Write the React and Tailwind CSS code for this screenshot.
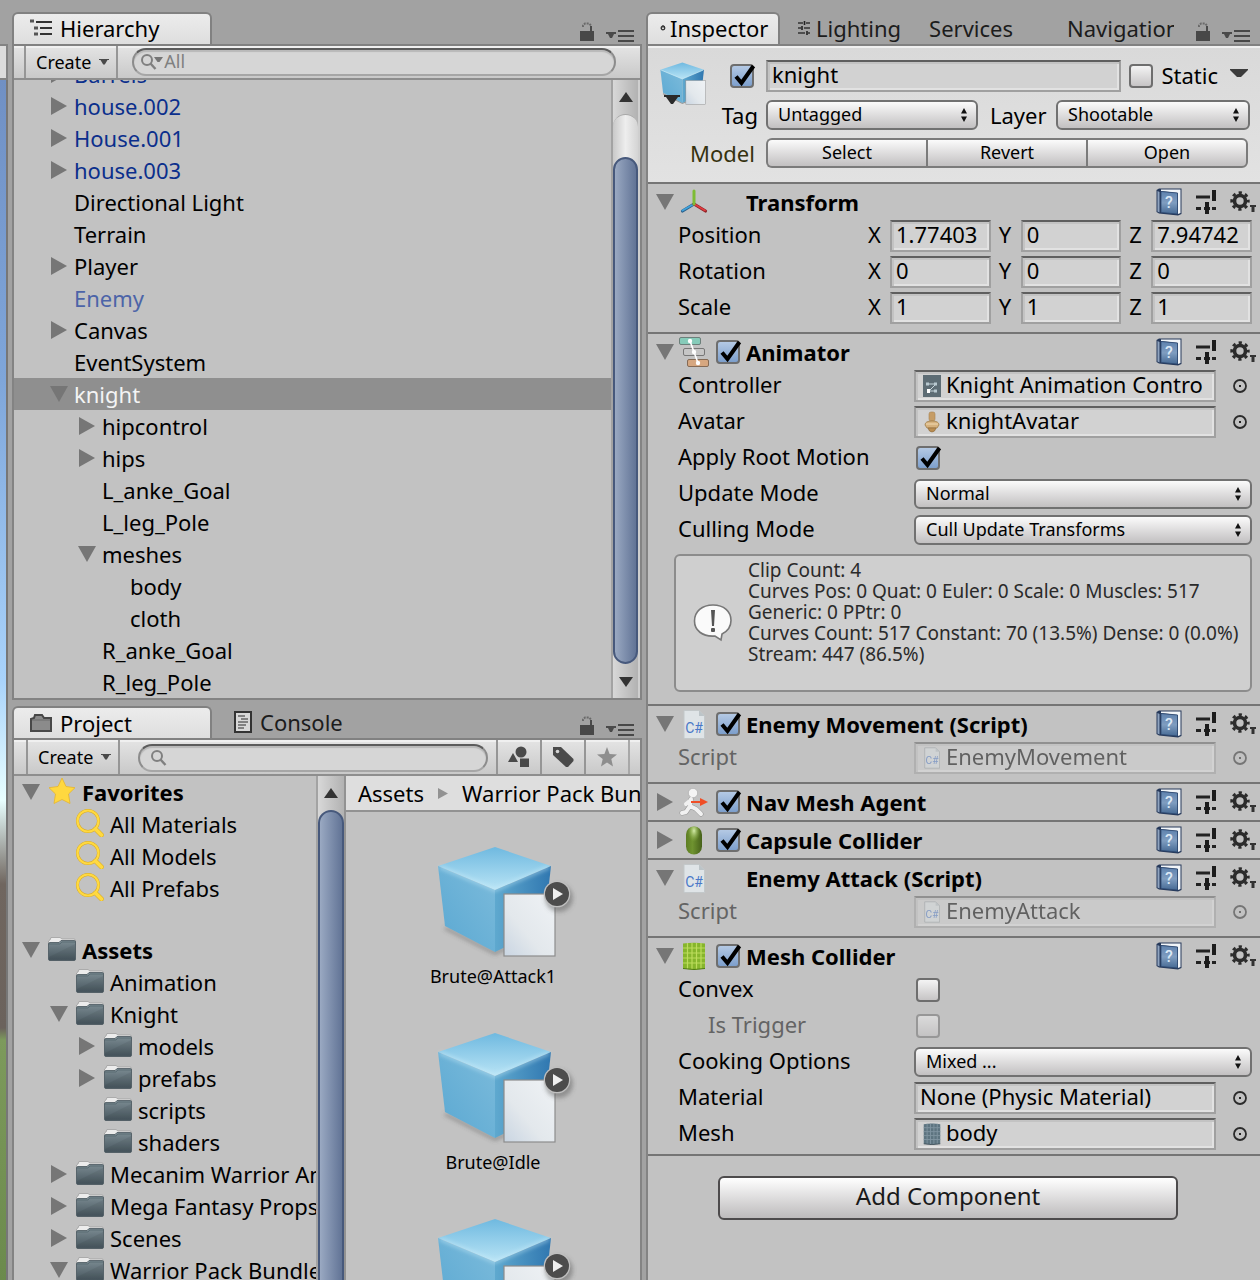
import React from "react";

/* ---------- small glyphs ---------- */

function Foldout({ open }) {
  return (
    <svg width="18" height="18" viewBox="0 0 18 18" className="block shrink-0" aria-hidden="true">
      <path d={open ? "M0 1H18L9 17Z" : "M1 0V18L17 9Z"} fill="#767676" />
    </svg>
  );
}

function Caret() {
  return (
    <svg width="10" height="6" viewBox="0 0 10 6" className="block shrink-0" aria-hidden="true">
      <path d="M0 0H10V1H8.500L5.800 5.500H4.200L1.500 1H0Z" fill="#4a4a4a" />
    </svg>
  );
}

function LockIcon() {
  return (
    <svg width="14" height="20" viewBox="0 0 14 20" className="block" aria-hidden="true">
      <path d="M3 5V3.500L5 1.500H9L11 3.500V9" fill="none" stroke="#6a6a6a" strokeWidth="2" strokeDasharray="2 1" />
      <path d="M11 4V9" stroke="#4a4a4a" strokeWidth="2" />
      <rect x="0" y="9" width="14" height="10" fill="#484848" />
    </svg>
  );
}

function MenuIcon() {
  return (
    <svg width="28" height="12" viewBox="0 0 28 12" className="block" aria-hidden="true">
      <path d="M0 2H10V4H8L6 8H4L2 4H0Z" fill="#4a4a4a" />
      <path d="M12 1H28M12 6H28M12 11H28" stroke="#484848" strokeWidth="2" />
    </svg>
  );
}

function HierarchyIcon() {
  return (
    <svg width="22" height="18" viewBox="0 0 22 18" className="block shrink-0" aria-hidden="true">
      <path d="M6 3H22M10 9H22M10 15H22" stroke="#333" strokeWidth="2" />
      <path d="M0 2H4M4 9H8M4 15H8" stroke="#555" strokeWidth="3" />
    </svg>
  );
}

function ProjectIcon() {
  return (
    <svg width="22" height="18" viewBox="0 0 22 18" className="block shrink-0" aria-hidden="true">
      <path d="M1 17V5L4 4L5 1H12L14 4H21V17Z" fill="#8b8b8b" stroke="#484848" strokeWidth="2" />
      <path d="M2 6H20" stroke="#6d6d6d" strokeWidth="1" />
    </svg>
  );
}

function ConsoleIcon() {
  return (
    <svg width="18" height="22" viewBox="0 0 18 22" className="block shrink-0" aria-hidden="true">
      <rect x="1" y="1" width="16" height="20" fill="#d8d8d8" stroke="#333" strokeWidth="2" />
      <path d="M4 5H11M7 8H14M4 11H14M4 14H12M4 17H10" stroke="#666" strokeWidth="1.300" />
    </svg>
  );
}

function LightingIcon() {
  return (
    <svg width="12" height="14" viewBox="0 0 12 14" className="block shrink-0" aria-hidden="true">
      <path d="M0 2H5M8 2H12M0 7H3M6 7H12M0 12H7M10 12H12" stroke="#333" strokeWidth="1.300" />
      <path d="M6.500 0V4M4 5V9M9 10V14" stroke="#222" strokeWidth="1.600" />
    </svg>
  );
}

function InspectorDot() {
  return (
    <svg width="6" height="6" viewBox="0 0 6 6" className="block shrink-0" aria-hidden="true">
      <circle cx="3" cy="3" r="1.800" fill="none" stroke="#333" strokeWidth="1.300" />
      <path d="M3 0V3" stroke="#333" />
    </svg>
  );
}

function SearchGlyph({ arrow }) {
  return (
    <svg width="24" height="18" viewBox="0 0 24 18" className="block shrink-0" aria-hidden="true">
      <circle cx="7" cy="7" r="5" fill="none" stroke="#808080" strokeWidth="2" />
      <path d="M10.500 10.500L15.500 16" stroke="#808080" strokeWidth="2.400" />
      {arrow && <path d="M14 4H23L19.500 9H17.500Z" fill="#757575" />}
    </svg>
  );
}

function TransformIcon() {
  return (
    <svg width="28" height="26" viewBox="0 0 28 26" className="block" aria-hidden="true">
      <path d="M14 15L2.500 22" stroke="#2c5f8a" strokeWidth="3.200" strokeLinecap="round" />
      <path d="M14 15L2.500 21.500" stroke="#3fa3dc" strokeWidth="1.800" strokeLinecap="round" />
      <path d="M14 15L25.500 22" stroke="#8d2226" strokeWidth="3.200" strokeLinecap="round" />
      <path d="M14 15L25 21.500" stroke="#e23c40" strokeWidth="1.600" strokeLinecap="round" />
      <path d="M14 15V2" stroke="#7ebc34" strokeWidth="3" strokeLinecap="round" />
    </svg>
  );
}

function AnimatorIcon() {
  return (
    <svg width="30" height="30" viewBox="0 0 30 30" className="block" aria-hidden="true">
      <rect x="0.500" y="0.500" width="21" height="7" rx="1.500" fill="#86cbb9" stroke="#6c7f7a" />
      <rect x="4.500" y="11.500" width="21" height="7" rx="1.500" fill="#c6c6c6" stroke="#777" />
      <rect x="8.500" y="22.500" width="21" height="7" rx="1.500" fill="#d6a780" stroke="#846a55" />
      <path d="M11 4L15 15L19 26" fill="none" stroke="#fff" strokeWidth="1.600" />
      <circle cx="11" cy="4" r="2.200" fill="#fff" />
      <circle cx="15" cy="15" r="2.200" fill="#fff" />
      <circle cx="19" cy="26" r="2.200" fill="#fff" />
    </svg>
  );
}

function ScriptIcon({ small }) {
  return (
    <svg width={small ? 16 : 22} height={small ? 22 : 29} viewBox="0 0 22 29" className="block shrink-0" aria-hidden="true">
      <path d="M1 0.500H16L21.500 6V28.500H1Z" fill="#dfe4e7" stroke={small ? "#8f989c" : "#c3c8ca"} />
      <path d="M16 0.500V6H21.500Z" fill="#bcc4c8" />
      <text x="11" y="23" textAnchor="middle" fontSize="14" fontFamily="Roboto, sans-serif" fill="#4a78c8">C#</text>
    </svg>
  );
}

function NavAgentIcon() {
  return (
    <svg width="30" height="29" viewBox="0 0 30 29" className="block" aria-hidden="true">
      <g stroke="#9a9a9a" strokeWidth="5" fill="none" strokeLinecap="round" strokeLinejoin="round">
        <path d="M12 11L11 18L17 21L22 26M11 18L7 24L3 25" />
      </g>
      <circle cx="14" cy="5" r="4.700" fill="#f4f4f4" stroke="#aaa" strokeWidth="0.700" />
      <g stroke="#f1f1f1" strokeWidth="4" fill="none" strokeLinecap="round" strokeLinejoin="round">
        <path d="M12 11L11 18L17 21L22 26M11 18L7 24L3 25M12 12L7 16" />
      </g>
      <path d="M12 14H23" stroke="#f04e26" strokeWidth="2" />
      <path d="M21 10L29 14L21 18Z" fill="#f04e26" />
    </svg>
  );
}

function CapsuleIcon() {
  return (
    <svg width="18" height="29" viewBox="0 0 18 29" className="block" aria-hidden="true">
      <defs>
        <linearGradient id="capBody" x1="0" x2="1">
          <stop offset="0" stopColor="#5d7d22" />
          <stop offset="0.400" stopColor="#6f9330" />
          <stop offset="1" stopColor="#46611a" />
        </linearGradient>
        <radialGradient id="capTop" cx="0.500" cy="0.150" r="0.400">
          <stop offset="0" stopColor="#d5ecab" />
          <stop offset="1" stopColor="#8db347" stopOpacity="0" />
        </radialGradient>
      </defs>
      <rect x="1" y="0.500" width="16" height="28" rx="8" fill="url(#capBody)" />
      <rect x="1" y="0.500" width="16" height="28" rx="8" fill="url(#capTop)" />
    </svg>
  );
}

function MeshIcon({ small }) {
  const base = small ? "#5d7480" : "#86b52c";
  const line = small ? "#8094a0" : "#bcdc5c";
  const w = small ? 18 : 24;
  const h = small ? 22 : 28;
  return (
    <svg width={w} height={h} viewBox="0 0 24 28" preserveAspectRatio="none" className="block shrink-0" aria-hidden="true">
      <path d="M1 1.500Q12 0 23 1.500V26.500Q12 28.500 1 26.500Z" fill={base} />
      <path d="M5.500 1V27M10 1V28M14.500 1V28M19 1V27M1 6H23M1 11H23M1 16H23M1 21H23" stroke={line} strokeWidth="1.200" />
      <path d="M1 26.500Q12 28.500 23 26.500" fill="none" stroke={small ? "#33444d" : "#4f7a12"} />
    </svg>
  );
}

function ControllerIcon() {
  return (
    <svg width="18" height="22" viewBox="0 0 18 22" className="block shrink-0" aria-hidden="true">
      <rect width="18" height="22" fill="#5d6c74" />
      <path d="M5 9L13 9L6 16L13 16" fill="none" stroke="#c9d6dc" strokeWidth="1" />
      <path d="M3 7.500H6V10.500H3ZM11 7.500H14V10.500H11ZM11 14.500H14V17.500H11Z" fill="#b8c8cf" />
      <rect x="4" y="14" width="3" height="4" fill="#fff" />
    </svg>
  );
}

function AvatarIcon() {
  return (
    <svg width="18" height="22" viewBox="0 0 18 22" className="block shrink-0" aria-hidden="true">
      <rect x="6" y="1" width="6" height="9" rx="2" fill="#c69d66" stroke="#a88452" strokeWidth="0.600" />
      <path d="M2 14Q2 10 9 10Q16 10 16 14L14 17H4Z" fill="#d6b27e" stroke="#a07c48" strokeWidth="0.800" />
      <path d="M5 17H13Q12 21 9 21Q6 21 5 17Z" fill="#b98d52" stroke="#8a6636" strokeWidth="0.600" />
      <path d="M3 13H15" stroke="#efd9b2" />
    </svg>
  );
}

function PickerIcon() {
  return (
    <svg width="16" height="16" viewBox="0 0 16 16" className="block" aria-hidden="true">
      <circle cx="8" cy="8" r="6" fill="none" stroke="#2b2b2b" strokeWidth="1.800" />
      <rect x="7" y="7" width="2" height="2" fill="#222" />
    </svg>
  );
}

function BookIcon() {
  return (
    <svg width="26" height="28" viewBox="0 0 26 28" className="block" aria-hidden="true">
      <defs>
        <linearGradient id="bookFace" x1="0" y1="0" x2="0" y2="1">
          <stop offset="0" stopColor="#5f82ae" />
          <stop offset="0.500" stopColor="#7f9dc0" />
          <stop offset="1" stopColor="#466a94" />
        </linearGradient>
      </defs>
      <path d="M0.500 2L3 0.500H25.500V26L22 27.500L3 25.500L0.500 24Z" fill="#26395a" />
      <path d="M5 1.500H24.500V25L22 26V5L5 3Z" fill="#f2f5f8" />
      <path d="M1.500 3L3.500 4V24.500L1.500 23.500Z" fill="#8ea3bf" />
      <path d="M5 3.500L21.500 5V26L5 24.500Z" fill="url(#bookFace)" stroke="#2f4a72" strokeWidth="0.800" />
      <text x="13" y="20" textAnchor="middle" fontSize="16" fontWeight="500" fontFamily="Roboto, sans-serif" fill="#dce8f5">?</text>
    </svg>
  );
}

function PresetIcon() {
  return (
    <svg width="20" height="24" viewBox="0 0 20 24" className="block" aria-hidden="true">
      <path d="M0 7H14M0 18.500H5M8 18.500H14M16 18.500H20" stroke="#222" strokeWidth="3" />
      <path d="M18 0V11M11 12V24" stroke="#1c1c1c" strokeWidth="4" />
    </svg>
  );
}

function GearIcon() {
  return (
    <svg width="26" height="24" viewBox="0 0 26 24" className="block" aria-hidden="true">
      <circle cx="10" cy="11" r="5.500" fill="none" stroke="#2c2c2c" strokeWidth="3.600" />
      <circle cx="10" cy="11" r="8.300" fill="none" stroke="#2c2c2c" strokeWidth="2.800" strokeDasharray="3.260 3.260" strokeDashoffset="1.630" />
      <path d="M20 15H26V17H24.500V22H21.500V17H20Z" fill="#333" />
    </svg>
  );
}

function StarIcon() {
  return (
    <svg width="28" height="28" viewBox="0 0 28 28" className="block shrink-0" aria-hidden="true">
      <path d="M14 1L18 9.500L27 10.700L20.500 17L22 26.500L14 22.500L6 26.500L7.500 17L1 10.700L10 9.500Z" fill="#ffd83f" stroke="#e6b52c" strokeWidth="0.800" />
    </svg>
  );
}

function SavedSearchIcon() {
  return (
    <svg width="28" height="28" viewBox="0 0 28 28" className="block shrink-0" aria-hidden="true">
      <circle cx="12" cy="12" r="10.500" fill="none" stroke="#d9aa1e" strokeWidth="3" />
      <path d="M19.500 20L25.500 26" stroke="#d9aa1e" strokeWidth="4.600" strokeLinecap="round" />
      <circle cx="12" cy="12" r="10.500" fill="none" stroke="#ffd941" strokeWidth="2.200" />
      <path d="M19.500 20L25.500 26" stroke="#ffd941" strokeWidth="3.800" strokeLinecap="round" />
    </svg>
  );
}

function FolderIcon() {
  return (
    <svg width="28" height="24" viewBox="0 0 28 24" className="block shrink-0" aria-hidden="true">
      <defs>
        <linearGradient id="folderFace" x1="0" y1="0" x2="0" y2="1">
          <stop offset="0" stopColor="#7b8b92" />
          <stop offset="1" stopColor="#46555d" />
        </linearGradient>
      </defs>
      <path d="M0.500 6V4L2 3L3 0.500H12L14 2H26Q27.500 2 27.500 4V8H0.500Z" fill="#ececec" stroke="#a0a0a0" strokeWidth="0.800" />
      <path d="M0.500 7Q0.500 5.500 2 5.500H11L13 3.500H26.500Q27.500 3.500 27.500 5V22Q27.500 23.500 26 23.500H2Q0.500 23.500 0.500 22Z" fill="url(#folderFace)" stroke="#48565d" strokeWidth="0.800" />
      <path d="M1 7H12L14 5H27" fill="none" stroke="#566770" strokeWidth="0.800" />
      <path d="M1 20L27 7V22.500H1Z" fill="#000" fillOpacity="0.060" />
    </svg>
  );
}

function CubeArt({ size, badge }) {
  return (
    <svg width={size} height={size} viewBox="0 0 140 124" preserveAspectRatio="xMinYMin meet" className="block" aria-hidden="true">
      <defs>
        <linearGradient id="cubeTop" x1="0" y1="0" x2="0" y2="1">
          <stop offset="0" stopColor="#6fb9e0" />
          <stop offset="1" stopColor="#b9e4f5" />
        </linearGradient>
        <linearGradient id="cubeLeft" x1="1" y1="0" x2="0" y2="1">
          <stop offset="0" stopColor="#7cbbdb" />
          <stop offset="1" stopColor="#5aa8d2" />
        </linearGradient>
        <linearGradient id="cubeRight" x1="0" y1="0" x2="1" y2="0">
          <stop offset="0" stopColor="#5fa9cf" />
          <stop offset="1" stopColor="#3077b0" />
        </linearGradient>
        <linearGradient id="sheet" x1="1" y1="0" x2="0" y2="1">
          <stop offset="0" stopColor="#eff2f5" />
          <stop offset="0.600" stopColor="#e3e8ec" />
          <stop offset="1" stopColor="#c9d5e2" />
        </linearGradient>
        <filter id="soft" x="-20%" y="-20%" width="140%" height="150%">
          <feGaussianBlur stdDeviation="2" />
        </filter>
      </defs>
      <path d="M8 82L58 107L100 90" fill="none" stroke="#555" strokeOpacity="0.500" strokeWidth="3" filter="url(#soft)" />
      <path d="M1 20L58 1L114 20L58 44Z" fill="url(#cubeTop)" />
      <path d="M1 20L58 44V106L8 80Z" fill="url(#cubeLeft)" />
      <path d="M114 20L58 44V106L107 82Z" fill="url(#cubeRight)" />
      <path d="M3 21L58 44L112 21" fill="none" stroke="#cdeefa" strokeOpacity="0.800" strokeWidth="2" filter="url(#soft)" />
      <rect x="67" y="48" width="51" height="62" fill="url(#sheet)" stroke="#8c8c8c" strokeWidth="1.200" />
      {badge && (
        <g>
          <circle cx="122" cy="52" r="14" fill="#555" fillOpacity="0.450" filter="url(#soft)" />
          <circle cx="120" cy="48" r="13.300" fill="#c0c0c0" />
          <circle cx="120" cy="48" r="12" fill="#4c4c4c" />
          <path d="M116 42V54L126 48Z" fill="#efefef" />
        </g>
      )}
    </svg>
  );
}

function InfoBubble() {
  return (
    <svg width="42" height="40" viewBox="0 0 42 40" className="block shrink-0" aria-hidden="true">
      <path d="M21 2C32 2 39 8.500 39 17.500C39 24 35 28.500 30 31L29 37L23 33C10 34 2.500 27 2.500 18C2.500 8.500 10 2 21 2Z" fill="#fafafa" stroke="#777" strokeWidth="1.600" />
      <path d="M19 7H23L22 23H20Z" fill="#555" />
      <rect x="19" y="25" width="4" height="4" rx="1" fill="#555" />
    </svg>
  );
}

/* ---------- controls ---------- */

function Check({ on, label, disabled }) {
  return (
    <label className={"relative block h-6 w-6 shrink-0 " + (disabled ? "opacity-50" : "")}>
      <input
        type="checkbox"
        defaultChecked={on}
        disabled={disabled}
        aria-label={label}
        className="peer block h-6 w-6 appearance-none rounded border-2 border-[#6e6e6e] bg-linear-to-b from-[#f4f4f4] to-[#c6c4c5] checked:from-[#b4c9e4] checked:to-[#7d9fcc]"
      />
      <svg width="24" height="24" viewBox="0 0 24 24" className="pointer-events-none absolute left-0 top-0 hidden overflow-visible peer-checked:block" aria-hidden="true">
        <path d="M6 12.500L11.500 19L23.500 2" fill="none" stroke="#000" strokeWidth="4" />
      </svg>
    </label>
  );
}

function Popup({ value, id, className = "" }) {
  return (
    <span className={"relative block min-w-0 " + className}>
      <select
        id={id}
        className="block h-[30px] w-full appearance-none rounded-md border-2 border-[#717171] bg-linear-to-b from-[#fbfbfb] to-[#c2c0c1] pb-0.5 pl-2.5 pr-6 text-lg leading-6 text-black"
      >
        <option>{value}</option>
      </select>
      <svg width="8" height="14" viewBox="0 0 8 14" className="pointer-events-none absolute right-2.5 top-2" aria-hidden="true">
        <path d="M4 0L7 5.500H1ZM4 14L7 8.500H1Z" fill="#111" />
      </svg>
    </span>
  );
}

const fieldFrame =
  "border-2 border-t-[#5f5f5f] border-x-[#a0a0a0] border-b-[#a0a0a0] bg-[#d2d2d2] shadow-[inset_2px_2px_0_#c3c3c3,inset_-2px_-2px_0_#e2e2e2]";

function ObjectField({ id, icon, value, disabled }) {
  return (
    <div className={"flex min-w-0 grow items-center " + (disabled ? "opacity-50" : "")}>
      <div className={"flex h-8 min-w-0 grow items-center gap-0.5 pl-1 " + fieldFrame}>
        {icon && <span className="flex w-6 shrink-0 justify-center">{icon}</span>}
        <input id={id} defaultValue={value} disabled={disabled} className="h-7 w-full min-w-0 bg-transparent pb-1 text-[22px] text-black outline-none" />
      </div>
      <button type="button" disabled={disabled} aria-label={"Pick " + value} className="ml-4 mr-1 shrink-0">
        <PickerIcon />
      </button>
    </div>
  );
}

function Row({ label, id, children, indent, dim }) {
  return (
    <div className="flex h-9 items-center pl-[30px] pr-2">
      <label htmlFor={id} className={"w-[236px] shrink-0 whitespace-nowrap pb-1 " + (indent ? "pl-[30px] " : "") + (dim ? "text-[#646464]" : "")}>
        {label}
      </label>
      {children}
    </div>
  );
}

function VectorRow({ label, values }) {
  return (
    <div className="flex h-9 items-center pl-[30px] pr-2">
      <span className="w-[182px] shrink-0 pb-1">{label}</span>
      {["X", "Y", "Z"].map((axis, i) => (
        <label key={axis} className="flex min-w-0 flex-1 items-center pl-2">
          <span className="w-[22px] shrink-0 pb-1">{axis}</span>
          <input defaultValue={values[i]} className={"h-8 w-full min-w-0 pb-1 pl-1 text-[22px] text-black outline-none " + fieldFrame} />
        </label>
      ))}
    </div>
  );
}

function Component({ title, icon, open, check, children, pad }) {
  return (
    <section className={"border-t-2 border-[#757575] pt-0.5 " + (pad || "pb-1.5")}>
      <header className="flex h-8 items-center pl-2 pr-1">
        <button type="button" aria-label={"Toggle " + title} aria-expanded={!!open}>
          <Foldout open={open} />
        </button>
        <span className="ml-1 flex w-8 shrink-0 justify-center">{icon}</span>
        <span className="ml-1.5 w-[30px] shrink-0">{check && <Check on label={"Enable " + title} />}</span>
        <h2 className="min-w-0 grow truncate font-bold">{title}</h2>
        <button type="button" aria-label="Help" className="mr-3.5"><BookIcon /></button>
        <button type="button" aria-label="Presets" className="mr-3.5"><PresetIcon /></button>
        <button type="button" aria-label="Settings"><GearIcon /></button>
      </header>
      {children}
    </section>
  );
}

function TabTools() {
  return (
    <div className="ml-auto flex items-end gap-3 pb-0.5">
      <button type="button" aria-label="Lock"><LockIcon /></button>
      <button type="button" aria-label="Panel menu"><MenuIcon /></button>
    </div>
  );
}

function ActiveTab({ icon, children, className }) {
  return (
    <button type="button" role="tab" aria-selected="true" className={"flex h-8 items-center overflow-hidden rounded-t-md border-2 border-b-0 border-[#818181] bg-linear-to-b from-[#ececec] to-[#dedede] whitespace-nowrap " + className}>
      {icon}
      {children}
    </button>
  );
}

function CreateButton() {
  return (
    <button type="button" className="flex items-center gap-2 border-x-2 border-[#969696] pl-2.5 pr-[7px] text-lg">
      Create <Caret />
    </button>
  );
}

const searchBox =
  "flex h-7 min-w-0 grow items-center rounded-full border-2 border-t-[#5c5c5c] border-x-[#8c8c8c] border-b-[#a6a6a6] bg-[#d6d6d6] shadow-[inset_0_2px_1px_#b9b9b9]";
const toolbar = "flex shrink-0 border-b-2 border-[#8e8e8e] bg-linear-to-b from-[#e4e4e4] to-[#c9c9c9] shadow-[inset_0_2px_0_#f0f0f0]";
const thumb = "rounded-full border-2 border-[#47597c] bg-linear-to-r from-[#9aa9c2] to-[#627496]";

/* ---------- hierarchy ---------- */

const nodes = [
  { name: "Barrels", level: 0, fold: "closed", tone: "prefab" },
  { name: "house.002", level: 0, fold: "closed", tone: "prefab" },
  { name: "House.001", level: 0, fold: "closed", tone: "prefab" },
  { name: "house.003", level: 0, fold: "closed", tone: "prefab" },
  { name: "Directional Light", level: 0 },
  { name: "Terrain", level: 0 },
  { name: "Player", level: 0, fold: "closed" },
  { name: "Enemy", level: 0, tone: "inactive" },
  { name: "Canvas", level: 0, fold: "closed" },
  { name: "EventSystem", level: 0 },
  { name: "knight", level: 0, fold: "open", tone: "selected" },
  { name: "hipcontrol", level: 1, fold: "closed" },
  { name: "hips", level: 1, fold: "closed" },
  { name: "L_anke_Goal", level: 1 },
  { name: "L_leg_Pole", level: 1 },
  { name: "meshes", level: 1, fold: "open" },
  { name: "body", level: 2 },
  { name: "cloth", level: 2 },
  { name: "R_anke_Goal", level: 1 },
  { name: "R_leg_Pole", level: 1 },
];

const tones = {
  prefab: "text-[#0b2f8c]",
  inactive: "text-[#4c64a8]",
  selected: "bg-[#8f8f8f] text-[#f4f4f4]",
};
const indents = ["pl-9", "pl-16", "pl-[92px]"];

function Hierarchy() {
  return (
    <section className="flex min-h-0 flex-[700] flex-col">
      <div className="flex shrink-0 items-end border-b-2 border-[#818181] pr-2 pt-3">
        <ActiveTab className="w-[200px] gap-2 pb-0.5 pl-4" icon={<HierarchyIcon />}>Hierarchy</ActiveTab>
        <TabTools />
      </div>
      <div className="flex min-h-0 grow flex-col border-x-2 border-b-2 border-[#838383] bg-[#c2c2c2]">
        <div className={"h-[34px] items-stretch pl-2.5 " + toolbar}>
          <CreateButton />
          <div className="flex grow items-start pl-3.5 pr-6 pt-0.5">
            <label className={"pl-1.5 " + searchBox}>
              <SearchGlyph arrow />
              <input type="search" placeholder="All" aria-label="Search hierarchy" className="min-w-0 grow bg-transparent pb-0.5 text-lg leading-6 outline-none placeholder:text-[#808080]" />
            </label>
          </div>
        </div>
        <div className="flex min-h-0 grow">
          <div className="min-w-0 grow overflow-hidden">
            <ul className="-mt-[22px]">
              {nodes.map((n) => (
                <li key={n.name} className={"flex h-8 items-center gap-1.5 " + indents[n.level] + " " + (tones[n.tone] || "text-black")}>
                  <span className="w-[18px] shrink-0">{n.fold && <Foldout open={n.fold === "open"} />}</span>
                  <button type="button">{n.name}</button>
                </li>
              ))}
            </ul>
          </div>
          <div className="flex w-[29px] shrink-0 flex-col border-l-2 border-r-2 border-l-[#a3a3a3] border-r-[#cfcfcf] bg-linear-to-r from-[#d8d8d8] to-[#b2b2b2] pt-3">
            <svg width="14" height="12" viewBox="0 0 14 12" className="mx-auto shrink-0" aria-hidden="true"><path d="M7 0L14 10H0Z" fill="#333" /></svg>
            <div className="mt-2.5 flex min-h-0 grow flex-col rounded-full border-t border-[#a8a8a8] bg-linear-to-r from-[#c9c9c9] via-[#eeeeee] to-[#d4d4d4] pt-[42px]">
              <div className={"min-h-0 grow " + thumb} />
            </div>
            <svg width="14" height="12" viewBox="0 0 14 12" className="mx-auto mb-2.5 mt-3 shrink-0" aria-hidden="true"><path d="M0 1H14L7 11Z" fill="#333" /></svg>
          </div>
        </div>
      </div>
    </section>
  );
}

/* ---------- project ---------- */

const folders = [
  { name: "Assets", level: 0, fold: "open", bold: true },
  { name: "Animation", level: 1 },
  { name: "Knight", level: 1, fold: "open" },
  { name: "models", level: 2, fold: "closed" },
  { name: "prefabs", level: 2, fold: "closed" },
  { name: "scripts", level: 2 },
  { name: "shaders", level: 2 },
  { name: "Mecanim Warrior Anim", level: 1, fold: "closed" },
  { name: "Mega Fantasy Props", level: 1, fold: "closed" },
  { name: "Scenes", level: 1, fold: "closed" },
  { name: "Warrior Pack Bundle", level: 1, fold: "open" },
];
const folderIndents = ["pl-2", "pl-9", "pl-16"];

function FolderRow({ item, icon }) {
  return (
    <li className={"flex h-8 items-center whitespace-nowrap " + folderIndents[item.level]}>
      <span className="w-[18px] shrink-0">{item.fold && <Foldout open={item.fold === "open"} />}</span>
      <span className="ml-2 mr-1.5 shrink-0 pb-0.5">{icon}</span>
      <button type="button" className={item.bold ? "font-bold" : ""}>{item.name}</button>
    </li>
  );
}

function Project() {
  return (
    <section className="flex min-h-0 flex-[580] flex-col">
      <div className="flex shrink-0 items-end border-b-2 border-[#818181] pr-2 pt-1.5">
        <ActiveTab className="w-[200px] gap-2 pl-4" icon={<ProjectIcon />}>Project</ActiveTab>
        <button type="button" role="tab" className="ml-[22px] flex h-8 items-center gap-2 text-[#1c1c1c]">
          <ConsoleIcon />Console
        </button>
        <TabTools />
      </div>
      <div className="flex min-h-0 grow flex-col border-x-2 border-[#838383] bg-[#c2c2c2]">
        <div className={"h-9 items-stretch pl-3 " + toolbar}>
          <CreateButton />
          <div className="flex grow items-start pl-[18px] pr-2 pt-1">
            <label className={"pl-2.5 " + searchBox}>
              <SearchGlyph />
              <input type="search" aria-label="Search project" className="min-w-0 grow bg-transparent text-lg leading-6 outline-none" />
            </label>
          </div>
          <button type="button" aria-label="Search by type" className="flex w-11 items-center justify-center border-l-2 border-[#969696]">
            <svg width="24" height="22" viewBox="0 0 24 22" aria-hidden="true"><circle cx="14" cy="6" r="5.500" fill="#4a4a4a" /><path d="M1 16L6 7L11 16Z" fill="#4a4a4a" /><rect x="13" y="12.500" width="9" height="8.500" fill="#4a4a4a" /></svg>
          </button>
          <button type="button" aria-label="Search by label" className="flex w-11 items-center justify-center border-l-2 border-[#969696]">
            <svg width="22" height="22" viewBox="0 0 22 22" aria-hidden="true"><path d="M1 1H9L21.500 13V15L16 21H14L1 9Z" fill="#4a4a4a" /><circle cx="5.500" cy="5.500" r="1.800" fill="#d5d5d5" /></svg>
          </button>
          <button type="button" aria-label="Save search" className="flex w-11 items-center justify-center border-l-2 border-[#969696]">
            <svg width="20" height="20" viewBox="0 0 20 20" aria-hidden="true"><path d="M10 0L12.600 7L20 7.500L14.300 12L16 19.500L10 15.500L4 19.500L5.700 12L0 7.500L7.400 7Z" fill="#8e8e8e" /></svg>
          </button>
          <span className="w-3 shrink-0 border-l-2 border-[#a8a8a8]" />
        </div>
        <div className="flex min-h-0 grow">
          <div className="min-w-0 flex-[303] overflow-hidden">
            <ul>
              <FolderRow item={{ name: "Favorites", level: 0, fold: "open", bold: true }} icon={<StarIcon />} />
              {["All Materials", "All Models", "All Prefabs"].map((name) => (
                <FolderRow key={name} item={{ name, level: 1 }} icon={<SavedSearchIcon />} />
              ))}
            </ul>
            <ul className="mt-[30px]">
              {folders.map((f) => (
                <FolderRow key={f.name} item={f} icon={<FolderIcon />} />
              ))}
            </ul>
          </div>
          <div className="flex w-7 shrink-0 flex-col border-l-2 border-[#a3a3a3] bg-linear-to-r from-[#d8d8d8] to-[#b2b2b2] pt-3">
            <svg width="14" height="12" viewBox="0 0 14 12" className="mx-auto shrink-0" aria-hidden="true"><path d="M7 0L14 10H0Z" fill="#333" /></svg>
            <div className={"mt-2.5 -mb-8 min-h-0 grow " + thumb} />
          </div>
          <div className="flex min-w-0 flex-[295] flex-col overflow-hidden border-l-2 border-[#929292]">
            <nav className="flex h-9 shrink-0 items-center gap-[13px] border-b-2 border-[#929292] bg-[#dedede] pl-3 whitespace-nowrap">
              <a href="#assets">Assets</a>
              <svg width="12" height="12" viewBox="0 0 12 12" className="shrink-0" aria-hidden="true"><path d="M1 1L11 6.500L1 12Z" fill="#929292" /></svg>
              <a href="#bundle">Warrior Pack Bundle</a>
            </nav>
            <ul className="min-h-0 pt-[34px]">
              {["Brute@Attack1", "Brute@Idle", "Brute@Run"].map((name) => (
                <li key={name} className="h-[186px]">
                  <button type="button" className="flex w-full flex-col items-center">
                    <span className="block h-[118px] overflow-hidden pl-7"><CubeArt size={140} badge /></span>
                    <span className="text-lg leading-6">{name}</span>
                  </button>
                </li>
              ))}
            </ul>
          </div>
        </div>
      </div>
    </section>
  );
}

/* ---------- inspector ---------- */

function InspectorHeader() {
  const segment = "h-[30px] flex-1 border-2 border-[#7b7b7b] bg-linear-to-b from-[#fbfbfb] to-[#c2c0c1] pb-0.5 text-lg leading-6";
  return (
    <div className="flex h-[136px] shrink-0 flex-col gap-2 bg-linear-to-b from-[#d9d9d9] to-[#e2e2e2] pl-3 pr-2.5 pt-3.5 shadow-[inset_0_2px_0_#f0f0f0]">
      <div className="flex">
        <span className="relative mt-0.5 block h-11 w-12 shrink-0 overflow-hidden">
          <CubeArt size={54} />
          <svg width="16" height="9" viewBox="0 0 16 9" className="absolute bottom-0.5 left-1" aria-hidden="true"><path d="M0 0H16V2H14L9 9H7L2 2H0Z" fill="#2a2a2a" /></svg>
        </span>
        <div className="flex min-w-0 grow flex-col gap-2">
          <div className="flex h-8 items-center pl-[22px] pr-0.5">
            <Check on label="Active" />
            <input aria-label="Name" defaultValue="knight" className={"ml-3 h-8 min-w-0 grow pb-1 pl-1 text-[22px] outline-none " + fieldFrame} />
            <span className="ml-2"><Check label="Static" /></span>
            <span className="ml-2 pb-0.5">Static</span>
            <button type="button" aria-label="Static options" className="ml-3 pb-1">
              <svg width="18" height="10" viewBox="0 0 18 10" className="block" aria-hidden="true"><path d="M0 0H18V1L11 8H7L0 1Z" fill="#3c3c3c" /></svg>
            </button>
          </div>
          <div className="flex h-[30px] items-center">
            <label htmlFor="tag" className="w-[58px] shrink-0 pr-2 text-right">Tag</label>
            <Popup id="tag" value="Untagged" className="flex-[212]" />
            <label htmlFor="layer" className="w-[78px] shrink-0 pl-3">Layer</label>
            <Popup id="layer" value="Shootable" className="flex-[194]" />
          </div>
        </div>
      </div>
      <div className="flex h-[30px] items-center pl-[30px] pr-0.5">
        <span className="w-[76px] shrink-0 text-[#35320f]">Model</span>
        <button type="button" className={"rounded-l-md border-r-0 " + segment}>Select</button>
        <button type="button" className={"border-r-0 " + segment}>Revert</button>
        <button type="button" className={"rounded-r-md " + segment}>Open</button>
      </div>
    </div>
  );
}

const clipStats = [
  "Clip Count: 4",
  "Curves Pos: 0 Quat: 0 Euler: 0 Scale: 0 Muscles: 517",
  "Generic: 0 PPtr: 0",
  "Curves Count: 517 Constant: 70 (13.5%) Dense: 0 (0.0%)",
  "Stream: 447 (86.5%)",
];

function Inspector() {
  return (
    <section className="flex min-h-0 min-w-0 flex-col">
      <div className="flex shrink-0 items-end overflow-hidden border-b-2 border-[#818181] pr-2.5 pt-3">
        <ActiveTab className="w-[134px] gap-1 pb-0.5 pl-3" icon={<InspectorDot />}>Inspector</ActiveTab>
        <button type="button" role="tab" className="ml-[18px] flex h-8 shrink-0 items-center gap-1.5 text-[#1c1c1c]"><LightingIcon />Lighting</button>
        <button type="button" role="tab" className="ml-7 h-8 shrink-0 text-[#1c1c1c]">Services</button>
        <button type="button" role="tab" className="ml-[54px] h-8 w-[107px] shrink-0 overflow-hidden text-left text-[#1c1c1c]">Navigation</button>
        <TabTools />
      </div>
      <div className="min-h-0 grow overflow-hidden border-l-2 border-[#838383] bg-[#c2c2c2]">
        <InspectorHeader />
        <Component title="Transform" icon={<TransformIcon />} open>
          <VectorRow label="Position" values={["1.77403", "0", "7.94742"]} />
          <VectorRow label="Rotation" values={["0", "0", "0"]} />
          <VectorRow label="Scale" values={["1", "1", "1"]} />
        </Component>
        <Component title="Animator" icon={<AnimatorIcon />} open check pad="pb-3">
          <Row label="Controller" id="controller"><ObjectField id="controller" icon={<ControllerIcon />} value="Knight Animation Contro" /></Row>
          <Row label="Avatar" id="avatar"><ObjectField id="avatar" icon={<AvatarIcon />} value="knightAvatar" /></Row>
          <Row label="Apply Root Motion"><span className="pl-0.5"><Check on label="Apply Root Motion" /></span></Row>
          <Row label="Update Mode" id="update"><Popup id="update" value="Normal" className="grow" /></Row>
          <Row label="Culling Mode" id="culling"><Popup id="culling" value="Cull Update Transforms" className="grow" /></Row>
          <div className="ml-[26px] mr-2 mt-1.5 flex h-[138px] items-center gap-3.5 rounded-md border-2 border-[#8c8c8c] bg-[#cfcfcf] pl-4">
            <InfoBubble />
            <div className="self-start whitespace-nowrap pt-1 text-[19px] leading-[21px] text-[#2a2a2a]">
              {clipStats.map((line) => <p key={line}>{line}</p>)}
            </div>
          </div>
        </Component>
        <Component title="Enemy Movement (Script)" icon={<ScriptIcon />} open check>
          <Row label="Script" id="script-move" dim><ObjectField id="script-move" icon={<ScriptIcon small />} value="EnemyMovement" disabled /></Row>
        </Component>
        <Component title="Nav Mesh Agent" icon={<NavAgentIcon />} check pad="pb-0.5" />
        <Component title="Capsule Collider" icon={<CapsuleIcon />} check pad="pb-0.5" />
        <Component title="Enemy Attack (Script)" icon={<ScriptIcon />} open>
          <Row label="Script" id="script-attack" dim><ObjectField id="script-attack" icon={<ScriptIcon small />} value="EnemyAttack" disabled /></Row>
        </Component>
        <Component title="Mesh Collider" icon={<MeshIcon />} open check pad="pb-0.5">
          <Row label="Convex"><span className="pl-0.5"><Check label="Convex" /></span></Row>
          <Row label="Is Trigger" indent dim><span className="pl-0.5"><Check label="Is Trigger" disabled /></span></Row>
          <Row label="Cooking Options" id="cooking"><Popup id="cooking" value="Mixed ..." className="grow" /></Row>
          <Row label="Material" id="material"><ObjectField id="material" value="None (Physic Material)" /></Row>
          <Row label="Mesh" id="mesh"><ObjectField id="mesh" icon={<MeshIcon small />} value="body" /></Row>
        </Component>
        <div className="border-t-2 border-[#757575] pl-[70px] pr-[82px] pt-5">
          <button type="button" className="mx-auto block h-11 w-full max-w-[460px] rounded-md border-2 border-[#4d4b4c] bg-linear-to-b from-white to-[#bdbbbc] pb-1 text-2xl leading-9 text-[#1a1a1a]">
            Add Component
          </button>
        </div>
      </div>
    </section>
  );
}

export default function App() {
  return (
    <main className="grid h-screen grid-cols-[8px_minmax(0,630fr)_minmax(0,614fr)] grid-rows-[minmax(0,1fr)] gap-x-1 overflow-hidden bg-[#a2a2a2] font-['Noto_Sans',sans-serif] text-[22px] leading-7 text-black">
      <div className="flex flex-col pt-11" aria-hidden="true">
        <div className="h-9 shrink-0 border-y-2 border-r-2 border-[#838383] bg-[#dcdcdc]" />
        <div className="grow border-r-2 border-[#777] bg-[linear-gradient(#7090c4_0%,#7fa6da_25%,#a9d3fb_50%,#e9ffff_60%,#70665f_67%,#6b625c_79%,#7d9a5c_80%,#6b8a4c_100%)]" />
      </div>
      <div className="flex min-h-0 min-w-0 flex-col">
        <Hierarchy />
        <Project />
      </div>
      <Inspector />
    </main>
  );
}
